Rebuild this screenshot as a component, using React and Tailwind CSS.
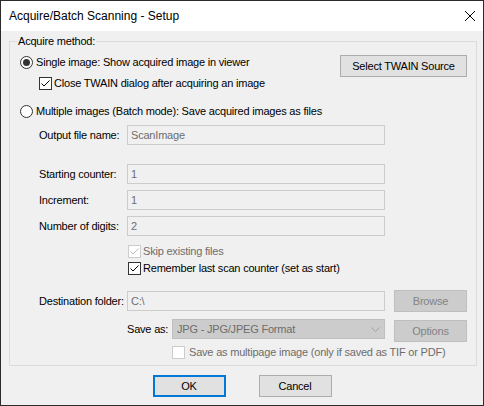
import { useState } from 'react'

function Radio({ checked }) {
  return (
    <span className="flex h-[13px] w-[13px] shrink-0 items-center justify-center rounded-full border border-[#333333] bg-white">
      {checked && <span className="h-[7px] w-[7px] rounded-full bg-[#333333]" />}
    </span>
  )
}

function Checkbox({ checked, disabled }) {
  const box = disabled ? 'border-[#cccccc] bg-white' : 'border-[#333333] bg-white'
  const stroke = disabled ? '#bcbcbc' : '#000000'
  return (
    <span className={`flex h-[13px] w-[13px] shrink-0 items-center justify-center border ${box}`}>
      {checked && (
        <svg width="11" height="11" viewBox="0 0 11 11" fill="none">
          <path d="M1.5 5.5 L4 8 L9.5 2.5" stroke={stroke} strokeWidth="1" />
        </svg>
      )}
    </span>
  )
}

function Field({ value }) {
  return (
    <input
      readOnly
      value={value}
      className="h-[20px] w-[258px] border border-[#cccccc] bg-[#f0f0f0] px-[3px] text-[#6d6d6d] outline-none"
    />
  )
}

function Button({ children, disabled, className = '' }) {
  const tone = disabled
    ? 'border-[#bfbfbf] bg-[#cccccc] text-[#838383]'
    : 'border-[#adadad] bg-[#e1e1e1] text-black'
  return (
    <button type="button" className={`flex h-[22px] items-center justify-center border ${tone} ${className}`}>
      {children}
    </button>
  )
}

function Row({ label, value, className = '' }) {
  return (
    <div className={`ml-[19px] flex h-[20px] items-center ${className}`}>
      <span className="w-[88px]">{label}</span>
      <Field value={value} />
    </div>
  )
}

export default function App() {
  const [single] = useState(true)

  return (
    <div className="flex h-[406px] w-[484px] flex-col whitespace-nowrap border border-[#2b2b2b] bg-[#f0f0f0] font-['Liberation_Sans',Arial,sans-serif] text-[11px] leading-[14px] tracking-[-0.2px] text-black">
      <header className="flex h-[30px] items-center justify-between bg-white px-[8px]">
        <span className="text-[12px] tracking-normal">Acquire/Batch Scanning - Setup</span>
        <svg width="10" height="10" viewBox="0 0 10 10" fill="none">
          <path d="M0 0 L10 10 M10 0 L0 10" stroke="#000000" strokeWidth="1" />
        </svg>
      </header>

      <fieldset className="ml-[8px] mt-[3px] w-[468px] border border-[#dcdcdc]">
        <legend className="ml-[7px] px-[1px] leading-[14px]">Acquire method:</legend>
        <div className="flex flex-col pb-[6px] pl-[10px] pr-[9px]">
          <div className="mt-[7px] flex items-start justify-between">
            <div className="flex flex-col">
              <label className="flex h-[14px] items-center gap-[3px]">
                <Radio checked={single} />
                <span>Single image: Show acquired image in viewer</span>
              </label>
              <label className="ml-[19px] mt-[7px] flex h-[14px] items-center gap-[2px]">
                <Checkbox checked />
                <span>Close TWAIN dialog after acquiring an image</span>
              </label>
            </div>
            <Button className="h-[21px] w-[127px]">Select TWAIN Source</Button>
          </div>

          <label className="mt-[14px] flex h-[14px] items-center gap-[3px]">
            <Radio checked={!single} />
            <span>Multiple images (Batch mode): Save acquired images as files</span>
          </label>

          <Row label="Output file name:" value="ScanImage" className="mt-[7px]" />
          <Row label="Starting counter:" value="1" className="mt-[19px]" />
          <Row label="Increment:" value="1" className="mt-[6px]" />
          <Row label="Number of digits:" value="2" className="mt-[6px]" />

          <label className="ml-[108px] mt-[8px] flex h-[14px] items-center gap-[2px] text-[#6d6d6d]">
            <Checkbox checked disabled />
            <span>Skip existing files</span>
          </label>
          <label className="ml-[108px] mt-[3px] flex h-[14px] items-center gap-[2px]">
            <Checkbox checked />
            <span>Remember last scan counter (set as start)</span>
          </label>

          <div className="ml-[19px] mt-[15px] flex h-[22px] items-center">
            <span className="w-[88px]">Destination folder:</span>
            <Field value="C:\" />
            <Button disabled className="ml-auto w-[73px]">Browse</Button>
          </div>

          <div className="ml-[107px] mt-[7px] flex items-start">
            <span className="flex h-[20px] w-[45px] items-center">Save as:</span>
            <div className="flex h-[20px] w-[213px] items-center justify-between border border-[#bfbfbf] bg-[#cccccc] pl-[4px] pr-[4px] text-[#6d6d6d]">
              <span>JPG - JPG/JPEG Format</span>
              <svg width="9" height="5" viewBox="0 0 9 5" fill="none">
                <path d="M0.5 0.5 L4.5 4.5 L8.5 0.5" stroke="#a2a2a2" strokeWidth="1" />
              </svg>
            </div>
            <Button disabled className="ml-auto mt-[1px] w-[73px]">Options</Button>
          </div>

          <label className="ml-[152px] mt-[3px] flex h-[14px] items-center gap-[4px] text-[#6d6d6d]">
            <Checkbox disabled />
            <span>Save as multipage image (only if saved as TIF or PDF)</span>
          </label>
        </div>
      </fieldset>

      <div className="mt-[9px] flex justify-center gap-[33px]">
        <button type="button" className="flex h-[22px] w-[73px] items-center justify-center border-2 border-[#0078d7] bg-[#e1e1e1]">
          OK
        </button>
        <Button className="w-[73px]">Cancel</Button>
      </div>
    </div>
  )
}
